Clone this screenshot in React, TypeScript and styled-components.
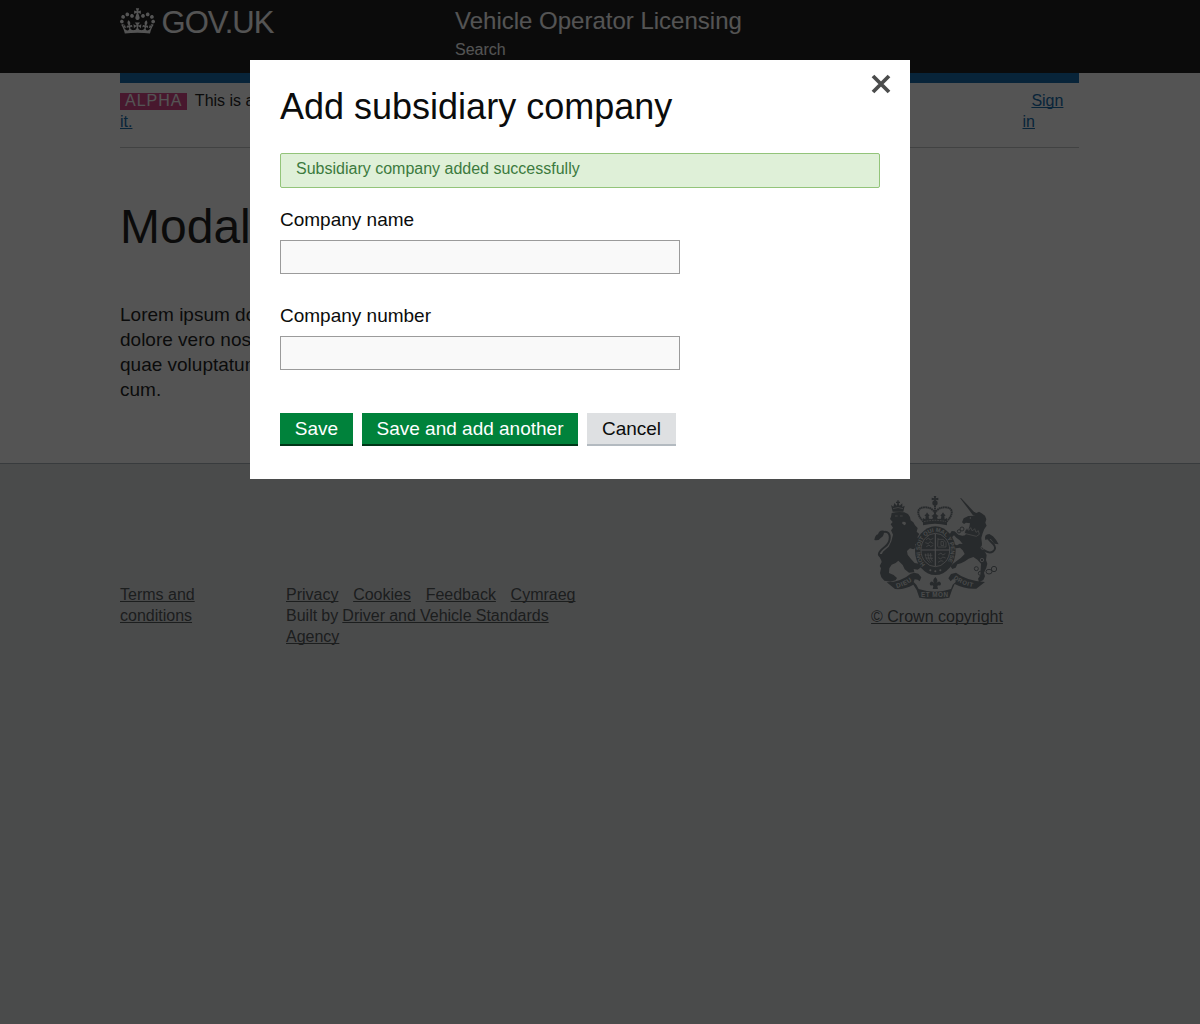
import React from "react";
import styled, { createGlobalStyle, css } from "styled-components";

const GlobalStyle = createGlobalStyle`
  html, body { margin: 0; padding: 0; height: 100%; background: #fff; }
  body {
    font-family: "Liberation Sans", Arial, Helvetica, sans-serif;
    font-size: 16px;
    line-height: 21px;
    color: #0b0c0c;
    overflow: hidden;
    -webkit-font-smoothing: antialiased;
  }
  *, *::before, *::after { box-sizing: border-box; }
`;

const Page = styled.div`
  display: flex;
  flex-direction: column;
  min-height: 100vh;
`;

const Container = styled.div`
  width: 959px;
  margin-left: 120px;
`;

/* Header */

const Header = styled.header`
  height: 73px;
  background: #0b0c0c;
  color: #fff;
`;

const HeaderInner = styled(Container)`
  display: grid;
  grid-template-columns: 335px 1fr;
`;

const Logo = styled.a`
  display: flex;
  align-items: flex-start;
  padding-top: 8px;
  font-size: 31px;
  line-height: 30px;
  letter-spacing: -0.95px;
  color: #fff;

  svg { margin-right: 6.5px; }
`;

const ServiceName = styled.div`
  padding-top: 6px;
  margin-bottom: 3px;
  font-size: 24px;
  line-height: 30px;
`;

/* Phase banner */

const PhaseBanner = styled(Container)`
  display: flex;
  justify-content: space-between;
  border-top: 10px solid #005ea5;
  border-bottom: 1px solid #bfc1c3;
  padding: 7px 0 15px;
`;

const PhaseTag = styled.strong`
  display: inline-block;
  margin-right: 7.4px;
  padding: 0 5px 2px;
  font-weight: 400;
  line-height: 15px;
  letter-spacing: 1px;
  color: #fff;
  background: #d53880;
`;

const Link = styled.a<{ $muted?: boolean }>`
  color: ${({ $muted }) => ($muted ? "#454a4c" : "#005ea5")};
  text-decoration: underline;
  text-decoration-skip-ink: none;
`;

const Hidden = styled.span`
  white-space: nowrap;
`;

const Account = styled.div`
  width: 56.5px;
`;

/* Main */

const Main = styled(Container)`
  height: 315px;
  padding-top: 54px;
`;

const Heading = styled.h1`
  margin: 0 0 50px;
  font-size: 48px;
  font-weight: 400;
  line-height: 50px;
`;

const Lead = styled.p`
  margin: 0;
  font-size: 19px;
  line-height: 25px;
`;

/* Footer */

const Footer = styled.footer`
  flex: 1;
  border-top: 1px solid #a1acb2;
  background: #dee0e2;
  color: #454a4c;
`;

const FooterInner = styled(Container)`
  display: grid;
  grid-template-columns: 166px 585px 132px;
  padding-top: 31px;
`;

const FooterColumn = styled.div`
  padding-top: 89px;
`;

const Terms = styled(FooterColumn)`
  width: 100px;
`;

const FooterLinks = styled.div`
  display: flex;
  gap: 14.7px;
`;

const BuiltBy = styled.div`
  width: 300px;
  word-spacing: -0.3px;
`;

const Copyright = styled.div`
  display: flex;
  flex-direction: column;
  align-items: center;
  white-space: nowrap;

  svg { margin-bottom: 7px; }
`;

/* Modal */

const Overlay = styled.div`
  position: fixed;
  inset: 0;
  background: #0b0c0c;
  opacity: 0.7;
`;

const Modal = styled.section`
  position: fixed;
  top: 60px;
  left: 250px;
  width: 660px;
  height: 419px;
  padding: 27px 30px 0;
  background: #fff;
`;

const CloseButton = styled.button`
  position: absolute;
  top: 14px;
  right: 19px;
  display: flex;
  padding: 0;
  border: 0;
  background: none;
`;

const ModalTitle = styled.h2`
  margin: 0 0 26px;
  font-size: 36px;
  font-weight: 400;
  line-height: 40px;
`;

const Notice = styled.div`
  height: 35px;
  margin-bottom: 19px;
  padding: 4px 15px 0;
  border: 1px solid #93c47a;
  border-radius: 2px;
  background: #dff0d8;
  color: #3c7a3e;
`;

const Field = styled.label`
  display: block;
  margin-bottom: 29px;
  font-size: 19px;
  line-height: 25px;
`;

const Input = styled.input`
  display: block;
  width: 400px;
  height: 34px;
  margin-top: 8px;
  padding: 4px;
  border: 1px solid #9b9b9b;
  border-radius: 0;
  background: #f9f9f9;
  font: inherit;
  outline: none;
`;

const Actions = styled.div`
  display: flex;
  gap: 9px;
  margin-top: 43px;
`;

const Button = styled.button<{ $width: number; $secondary?: boolean }>`
  width: ${({ $width }) => $width}px;
  height: 33px;
  padding: 0;
  border: 0;
  border-bottom: 2px solid;
  font: 19px/31px "Liberation Sans", Arial, sans-serif;
  white-space: nowrap;
  ${({ $secondary }) =>
    $secondary
      ? css`
          color: #0b0c0c;
          background: #dee0e2;
          border-color: #b3bac0;
        `
      : css`
          color: #fff;
          background: #00823b;
          border-color: #003618;
        `}
`;

const Crown = () => (
  <svg width="35" height="26" viewBox="0 0 132 97" fill="currentColor" aria-hidden="true">
    <path d="M25 30.2c3.5 1.5 7.7-.2 9.1-3.7 1.5-3.6-.2-7.8-3.9-9.2-3.6-1.4-7.6.3-9.1 3.9-1.4 3.5.3 7.5 3.9 9zM9 39.5c3.6 1.5 7.8-.2 9.2-3.7 1.5-3.6-.2-7.8-3.9-9.1-3.6-1.5-7.6.2-9.1 3.8-1.4 3.5.3 7.5 3.8 9zM4.4 57.2c3.5 1.5 7.7-.2 9.1-3.8 1.5-3.6-.2-7.7-3.9-9.1-3.5-1.5-7.6.3-9.1 3.8-1.4 3.5.3 7.6 3.9 9.1zm38.3-21.4c3.5 1.5 7.7-.2 9.1-3.8 1.5-3.6-.2-7.7-3.9-9.1-3.6-1.5-7.6.3-9.1 3.8-1.3 3.6.4 7.7 3.9 9.1zm64.4-5.6c-3.6 1.5-7.8-.2-9.1-3.7-1.5-3.6.2-7.8 3.8-9.2 3.6-1.4 7.7.3 9.2 3.9 1.3 3.5-.4 7.5-3.9 9zm15.9 9.3c-3.6 1.5-7.7-.2-9.1-3.7-1.5-3.6.2-7.8 3.7-9.1 3.6-1.5 7.7.2 9.2 3.8 1.5 3.5-.3 7.5-3.8 9zm4.7 17.7c-3.6 1.5-7.8-.2-9.2-3.8-1.5-3.6.2-7.7 3.9-9.1 3.6-1.5 7.7.3 9.2 3.8 1.3 3.5-.4 7.6-3.9 9.1zM89.3 35.8c-3.6 1.5-7.8-.2-9.2-3.8-1.4-3.6.2-7.7 3.9-9.1 3.6-1.5 7.7.3 9.2 3.8 1.4 3.6-.3 7.7-3.9 9.1zM69.7 17.7l8.9 4.7V9.3l-8.9 2.8c-.2-.3-.5-.6-.9-.9L72.4 0H59.6l3.5 11.2c-.3.3-.6.5-.9.9l-8.8-2.8v13.1l8.8-4.7c.3.3.6.7.9.9l-5 15.4v.1c-.2.8-.4 1.6-.4 2.4 0 4.1 3.1 7.5 7 8.1h.2c.3 0 .7.1 1 .1.4 0 .7 0 1-.1h.2c4-.6 7.1-4.1 7.1-8.1 0-.8-.1-1.7-.4-2.4V34l-5.1-15.4c.4-.2.7-.6 1-.9zM66 92.8c16.9 0 32.8 1.1 47.1 3.2 4-16.9 8.9-26.7 14-33.5l-9.6-3.4c1 4.9 1.1 7.2 0 10.2-1.5-1.4-3-4.3-4.2-8.7L108.6 76c2.8-2 5-3.2 7.5-3.3-4.4 9.4-10 11.9-13.6 11.2-4.3-.8-6.3-4.6-5.6-7.9 1-4.7 5.7-5.9 8-.5 4.3-8.7-3-11.4-7.6-8.8 7.1-7.2 7.9-13.5 2.1-21.1-8 6.1-8.1 12.3-4.5 20.8-4.7-5.4-12.1-2.5-9.5 6.2 3.4-5.2 7.9-2 7.2 3.1-.6 4.3-6.4 7.8-13.5 7.2-10.3-.9-10.9-8-11.2-13.8 2.5-.5 7.1 1.8 11 7.3L80.2 60c-4.1 4.4-8 5.3-12.3 5.4 1.4-4.4 8-11.6 8-11.6H55.5s6.4 7.2 7.9 11.6c-4.2-.1-8-1-12.3-5.4l1.4 16.4c3.9-5.5 8.5-7.7 10.9-7.3-.3 5.8-.9 12.8-11.1 13.8-7.2.6-12.9-2.9-13.5-7.2-.7-5 3.8-8.3 7.1-3.1 2.7-8.7-4.6-11.6-9.4-6.2 3.7-8.5 3.6-14.7-4.6-20.8-5.8 7.6-5 13.9 2.2 21.1-4.7-2.6-11.9.1-7.7 8.8 2.3-5.5 7.1-4.2 8.1.5.7 3.3-1.3 7.1-5.7 7.9-3.5.7-9-1.8-13.5-11.2 2.5.1 4.7 1.3 7.5 3.3l-4.7-15.4c-1.2 4.4-2.7 7.2-4.3 8.7-1.1-3-.9-5.3 0-10.2l-9.5 3.4c5 6.9 9.9 16.7 14 33.5 14.8-2.1 30.8-3.2 47.7-3.2z" />
  </svg>
);

const INK = "#6a7378";
const PAPER = "#dee0e2";

/* Royal coat of arms: lion, crowned garter shield, unicorn, motto scroll */
const Crest = () => (
  <svg width="126" height="104" viewBox="45 30 378 312" fill={INK} fontFamily="Liberation Sans, Arial, sans-serif" fontWeight="700">
    {/* lion's crown */}
    <path d="M101 80 96 60 103 65 106 54 113 62 117 53 122 62 130 55 130 66 137 62 133 80Z" />
    <path d="M115 46h4v4h4v4h-4v5h-4v-5h-4v-4h4z" />
    <path d="M102 71Q117 64 132 71" fill="none" stroke={PAPER} strokeWidth="2" />
    {/* lion */}
    <path d="M98 84Q116 79 136 82L147 87 153 96 155 106 163 112 168 121 176 129 173 140 181 147 175 157 184 166 177 174 168 178 170 188 163 193 153 190 144 198 146 209 156 222 167 234 180 236 186 247 176 254 164 252 166 262 150 263 137 253 131 240 118 227 110 234 98 239 91 250 90 264 104 270 114 279 110 286 94 290 76 287 67 277 63 264 66 250 62 243 68 231 64 217 72 200 89 185 97 169 102 149 96 136 102 128 95 118 101 111 93 102 96 95Z" />
    <path d="M108 93h8M123 93h8" fill="none" stroke={PAPER} strokeWidth="2" />
    <path d="M131 110l8 1 2 6-5 4-7-6z" fill={PAPER} />
    {/* lion's tail */}
    <path d="M70 218C49 210 64 196 77 186C98 171 97 139 77 140C65 140 63 153 54 161" fill="none" stroke={INK} strokeWidth="6" />
    <path d="M75 137Q60 134 57 148Q48 150 46 165Q58 169 66 158Q76 154 75 137ZM58 207L66 224 78 221 70 207Z" />
    {/* unicorn */}
    <path d="M303 39L307 40 351 87 343 92Z" />
    <path d="M346 92L344 80 352 84 360 80 368 85 378 92 382 103 379 113 383 122 376 132 371 145 367 159 369 176 368 187 376 197 383 210 381 225 385 236 382 248 375 263 378 274 373 285 360 292 357 281 364 271 365 254 366 236 355 224 343 216 329 221 318 229 306 235 295 238 290 248 280 252 274 244 282 236 292 229 305 219 317 207 311 196 303 188 291 190 283 184 277 175 286 178 294 181 302 176 311 177 302 166 292 158 285 151 277 158 271 149 278 138 287 139 298 149 310 152 318 151 326 139 331 125 333 115 321 113 315 117 309 112 314 100 328 93Z" />
    <path d="M318 137L324 130 329 136 335 128 340 138 347 131 351 142 358 137 361 148 352 154 316 145Z" stroke={PAPER} strokeWidth="2" />
    <circle cx="334" cy="99" r="2" fill={PAPER} />
    {/* unicorn's tail */}
    <path d="M368 190C396 216 420 193 402 176C382 157 383 155 396 158" fill="none" stroke={INK} strokeWidth="6" />
    <path d="M379 165Q374 147 391 147L402 154 411 164 419 178 406 176 395 162 387 162Z" />
    {/* chain */}
    <g fill="none" stroke={INK} strokeWidth="3">
      <circle cx="309" cy="132" r="6" />
      <circle cx="300" cy="139" r="5" />
      <circle cx="352" cy="251" r="6" />
      <circle cx="364" cy="265" r="6" />
      <ellipse cx="390" cy="260" rx="9" ry="7" />
      <circle cx="405" cy="252" r="8" />
    </g>
    <g fill="none" stroke={PAPER} strokeWidth="2.5">
      <circle cx="369" cy="225" r="5" />
      <circle cx="371" cy="188" r="5" />
    </g>
    {/* royal crown */}
    <circle cx="228" cy="54" r="8" />
    <path d="M224 33h8l-2 7 8-2v8l-8-2 2 7h-8l2-7-8 2v-8l8 2z" />
    <g fill="none" stroke={INK} strokeWidth="6" strokeDasharray="5 1.2">
      <path d="M194 110C170 88 174 67 197 67C212 66 223 74 228 84" />
      <path d="M262 110C286 88 282 67 259 67C244 66 233 74 228 84" />
      <path d="M228 61V91" />
    </g>
    <path d="M192 99L199 103 200 94 196 91 201 88 204 82 208 88 212 91 209 94 210 101 220 102 222 96 217 93 222 90 228 83 234 90 239 93 234 96 236 102 246 101 247 94 244 91 248 88 252 82 256 88 260 91 256 94 257 103 264 99 264 121Q228 111 192 121Z" />
    <path d="M195 110Q228 102 261 110" fill="none" stroke={PAPER} strokeWidth="2" strokeDasharray="5 3" />
    {/* garter and shield */}
    <ellipse cx="229" cy="197" rx="61" ry="73" />
    <ellipse cx="229" cy="195" rx="43" ry="50" fill={INK} stroke={PAPER} strokeWidth="2.5" />
    <g stroke={PAPER} fill="none" strokeWidth="2">
      <path d="M229 146V244M187 195H271" strokeWidth="3.5" />
      <path d="M201 164l8-5 4 6 10-5M199 173l9 3 5-6 10 6M202 185l8-5 5 5 8-4" />
      <path d="M237 159l-1 26M237 163h16l8 10v13h-24M246 169v12l8 1-1-12z" />
      <path d="M199 206c0 12 5 21 13 27M207 204c0 13 3 22 10 29M215 204c-1 9 0 18 6 25M197 210l23 1M200 219l22 1" />
      <path d="M238 209l8-5 5 6 8-4M238 218l7 4 6-6 9 3M237 232l9-5 7 2" />
    </g>
    <path id="garter" d="M199 239A46 56 0 1 1 259 239" fill="none" />
    <text fill={PAPER} fontSize="17">
      <textPath href="#garter">HONI SOIT QUI MAL Y PENSE</textPath>
    </text>
    <circle cx="214" cy="256" r="3" fill={PAPER} />
    <circle cx="229" cy="259" r="3" fill={PAPER} />
    <circle cx="244" cy="256" r="3" fill={PAPER} />
    {/* fleur-de-lis */}
    <path d="M229 276Q240 286 232 295Q242 284 246 296Q245 304 237 301L235 304 237 312H221L223 304 221 301Q213 304 212 296Q216 284 226 295Q218 286 229 276Z" />
    {/* motto scroll */}
    <path d="M83 292Q128 290 155 266L166 263 178 266 187 277 182 289 176 284 167 283 164 291 172 299 179 312Q228 328 276 312L281 299 290 291 289 283 281 283 275 289 268 280 276 267 291 263Q322 287 378 291L352 311Q317 313 287 297L279 315 271 338Q228 345 181 338L173 315 163 299Q136 315 108 312Z" />
    <path id="dieu" d="M113 309Q142 303 168 281" fill="none" />
    <path id="droit" d="M283 280Q308 302 352 308" fill="none" />
    <g fill={PAPER}>
      <text fontSize="19" letterSpacing="2"><textPath href="#dieu">DIEU</textPath></text>
      <text fontSize="18" letterSpacing="2"><textPath href="#droit">DROIT</textPath></text>
      <text x="186" y="336" fontSize="19" letterSpacing="1.5">ET MON</text>
    </g>
  </svg>
);

const CloseIcon = () => (
  <svg width="20" height="20" viewBox="0 0 20 20" fill="none" stroke="#4b4c4c" strokeWidth="3.8" aria-hidden="true">
    <path d="M2 2 18 18M18 2 2 18" />
  </svg>
);

export default function App() {
  return (
    <>
      <GlobalStyle />
      <Page>
        <Header>
          <HeaderInner>
            <Logo>
              <Crown />
              GOV.UK
            </Logo>
            <div>
              <ServiceName>Vehicle Operator Licensing</ServiceName>
              <div>Search</div>
            </div>
          </HeaderInner>
        </Header>

        <PhaseBanner>
          <div>
            <PhaseTag>ALPHA</PhaseTag>
            <Hidden>This is a new service</Hidden>
            <br />
            <Link>it.</Link>
          </div>
          <Account>
            &nbsp;&nbsp;<Link>Sign in</Link>
          </Account>
        </PhaseBanner>

        <Main>
          <Heading>Modal</Heading>
          <Lead>
            Lorem ipsum dolor
            <br />
            dolore vero nostrum
            <br />
            quae voluptatum
            <br />
            cum.
          </Lead>
        </Main>

        <Footer>
          <FooterInner>
            <Terms>
              <Link $muted>Terms and conditions</Link>
            </Terms>
            <FooterColumn>
              <FooterLinks>
                <Link $muted>Privacy</Link>
                <Link $muted>Cookies</Link>
                <Link $muted>Feedback</Link>
                <Link $muted>Cymraeg</Link>
              </FooterLinks>
              <BuiltBy>
                Built by <Link $muted>Driver and Vehicle Standards Agency</Link>
              </BuiltBy>
            </FooterColumn>
            <Copyright>
              <Crest />
              <Link $muted>© Crown copyright</Link>
            </Copyright>
          </FooterInner>
        </Footer>
      </Page>

      <Overlay />
      <Modal role="dialog">
        <CloseButton aria-label="Close">
          <CloseIcon />
        </CloseButton>
        <ModalTitle>Add subsidiary company</ModalTitle>
        <Notice>Subsidiary company added successfully</Notice>
        <Field>
          Company name
          <Input />
        </Field>
        <Field>
          Company number
          <Input />
        </Field>
        <Actions>
          <Button $width={73}>Save</Button>
          <Button $width={216}>Save and add another</Button>
          <Button $width={89} $secondary>Cancel</Button>
        </Actions>
      </Modal>
    </>
  );
}
